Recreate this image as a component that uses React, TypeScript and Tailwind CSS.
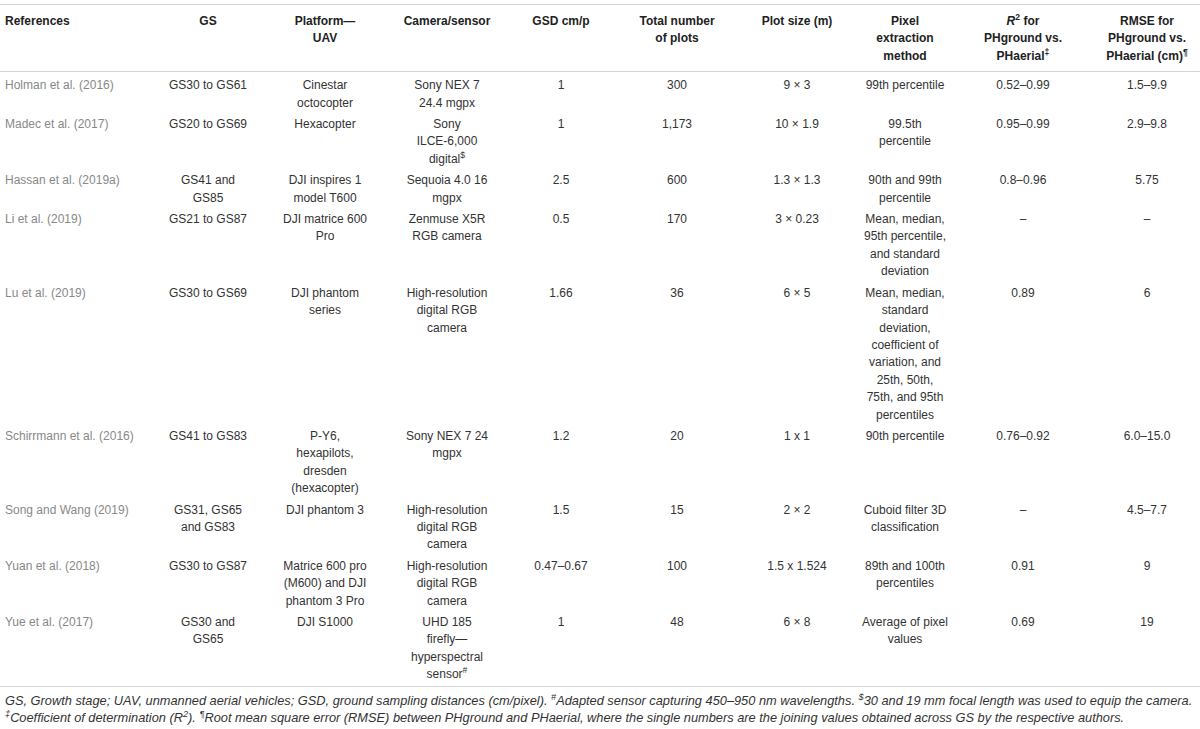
import type { ReactNode } from 'react';

type Row = { ref: string; cells: ReactNode[][] };

const cols = 'grid grid-cols-[150px_116px_118px_126px_102px_130px_110px_106px_130px_112px]';

const Sup = ({ children }: { children: ReactNode }) => (
  <span className="align-super text-[0.72em] leading-none">{children}</span>
);

const headers: ReactNode[][] = [
  ['GS'],
  ['Platform—', 'UAV'],
  ['Camera/sensor'],
  ['GSD cm/p'],
  ['Total number', 'of plots'],
  ['Plot size (m)'],
  ['Pixel', 'extraction', 'method'],
  [
    <>
      <i>R</i>
      <Sup>2</Sup> for
    </>,
    'PHground vs.',
    <>
      PHaerial<Sup>‡</Sup>
    </>,
  ],
  [
    'RMSE for',
    'PHground vs.',
    <>
      PHaerial (cm)<Sup>¶</Sup>
    </>,
  ],
];

const rows: Row[] = [
  {
    ref: 'Holman et al. (2016)',
    cells: [['GS30 to GS61'], ['Cinestar', 'octocopter'], ['Sony NEX 7', '24.4 mgpx'], ['1'], ['300'], ['9 × 3'], ['99th percentile'], ['0.52–0.99'], ['1.5–9.9']],
  },
  {
    ref: 'Madec et al. (2017)',
    cells: [
      ['GS20 to GS69'],
      ['Hexacopter'],
      ['Sony', 'ILCE-6,000', <>digital<Sup>$</Sup></>],
      ['1'],
      ['1,173'],
      ['10 × 1.9'],
      ['99.5th', 'percentile'],
      ['0.95–0.99'],
      ['2.9–9.8'],
    ],
  },
  {
    ref: 'Hassan et al. (2019a)',
    cells: [['GS41 and', 'GS85'], ['DJI inspires 1', 'model T600'], ['Sequoia 4.0 16', 'mgpx'], ['2.5'], ['600'], ['1.3 × 1.3'], ['90th and 99th', 'percentile'], ['0.8–0.96'], ['5.75']],
  },
  {
    ref: 'Li et al. (2019)',
    cells: [
      ['GS21 to GS87'],
      ['DJI matrice 600', 'Pro'],
      ['Zenmuse X5R', 'RGB camera'],
      ['0.5'],
      ['170'],
      ['3 × 0.23'],
      ['Mean, median,', '95th percentile,', 'and standard', 'deviation'],
      ['–'],
      ['–'],
    ],
  },
  {
    ref: 'Lu et al. (2019)',
    cells: [
      ['GS30 to GS69'],
      ['DJI phantom', 'series'],
      ['High-resolution', 'digital RGB', 'camera'],
      ['1.66'],
      ['36'],
      ['6 × 5'],
      ['Mean, median,', 'standard', 'deviation,', 'coefficient of', 'variation, and', '25th, 50th,', '75th, and 95th', 'percentiles'],
      ['0.89'],
      ['6'],
    ],
  },
  {
    ref: 'Schirrmann et al. (2016)',
    cells: [
      ['GS41 to GS83'],
      ['P-Y6,', 'hexapilots,', 'dresden', '(hexacopter)'],
      ['Sony NEX 7 24', 'mgpx'],
      ['1.2'],
      ['20'],
      ['1 x 1'],
      ['90th percentile'],
      ['0.76–0.92'],
      ['6.0–15.0'],
    ],
  },
  {
    ref: 'Song and Wang (2019)',
    cells: [
      ['GS31, GS65', 'and GS83'],
      ['DJI phantom 3'],
      ['High-resolution', 'digital RGB', 'camera'],
      ['1.5'],
      ['15'],
      ['2 × 2'],
      ['Cuboid filter 3D', 'classification'],
      ['–'],
      ['4.5–7.7'],
    ],
  },
  {
    ref: 'Yuan et al. (2018)',
    cells: [
      ['GS30 to GS87'],
      ['Matrice 600 pro', '(M600) and DJI', 'phantom 3 Pro'],
      ['High-resolution', 'digital RGB', 'camera'],
      ['0.47–0.67'],
      ['100'],
      ['1.5 x 1.524'],
      ['89th and 100th', 'percentiles'],
      ['0.91'],
      ['9'],
    ],
  },
  {
    ref: 'Yue et al. (2017)',
    cells: [
      ['GS30 and', 'GS65'],
      ['DJI S1000'],
      ['UHD 185', 'firefly—', 'hyperspectral', <>sensor<Sup>#</Sup></>],
      ['1'],
      ['48'],
      ['6 × 8'],
      ['Average of pixel', 'values'],
      ['0.69'],
      ['19'],
    ],
  },
];

function Cell({ lines, last }: { lines: ReactNode[]; last?: boolean }) {
  return (
    <div className={last ? 'flex flex-col items-center pl-[6px]' : 'flex flex-col items-center'}>
      {lines.map((line, i) => (
        <div key={i} className="whitespace-nowrap">
          {line}
        </div>
      ))}
    </div>
  );
}

export default function App() {
  return (
    <div className="w-[1200px] bg-white pt-[4px] font-['Liberation_Sans',Arial,sans-serif] text-[12px] leading-[17.4px] text-[#333]">
      <div className={`${cols} border-y border-[#d4d4d4] pt-[8px] pb-[6px] font-bold text-[#222]`}>
        <div className="pl-[5px]">References</div>
        {headers.map((h, i) => (
          <Cell key={i} lines={h} last={i === headers.length - 1} />
        ))}
      </div>

      <div className="pt-[3px]">
        {rows.map((row) => (
          <div key={row.ref} className={`${cols} py-[2px]`}>
            <div className="pl-[5px] whitespace-nowrap text-[#888]">{row.ref}</div>
            {row.cells.map((c, i) => (
              <Cell key={i} lines={c} last={i === row.cells.length - 1} />
            ))}
          </div>
        ))}
      </div>

      <div className="border-t border-[#d4d4d4] pt-[5px] pl-[5px] text-[12.8px] italic leading-[17px]">
        <div className="whitespace-nowrap">
          GS, Growth stage; UAV, unmanned aerial vehicles; GSD, ground sampling distances (cm/pixel). <Sup>#</Sup>Adapted
          sensor capturing 450–950 nm wavelengths. <Sup>$</Sup>30 and 19 mm focal length was used to equip the camera.
        </div>
        <div className="whitespace-nowrap">
          <Sup>‡</Sup>Coefficient of determination (R<Sup>2</Sup>). <Sup>¶</Sup>Root mean square error (RMSE) between
          PHground and PHaerial, where the single numbers are the joining values obtained across GS by the respective
          authors.
        </div>
      </div>
    </div>
  );
}
